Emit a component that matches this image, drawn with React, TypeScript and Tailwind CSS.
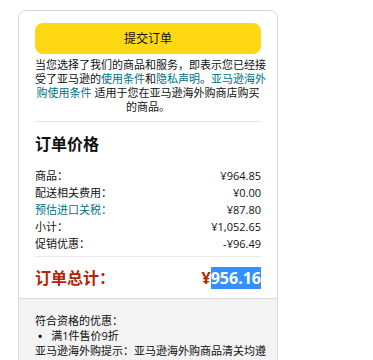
const rows: { label: string; value: string; link?: boolean }[] = [
  { label: "商品：", value: "¥964.85" },
  { label: "配送相关费用：", value: "¥0.00" },
  { label: "预估进口关税：", value: "¥87.80", link: true },
  { label: "小计：", value: "¥1,052.65" },
  { label: "促销优惠：", value: "-¥96.49" },
];

export default function App() {
  return (
    <div
      className="relative w-[373px] h-[360px] overflow-hidden bg-white pl-[18px] pt-[10px] text-[#0f1111]"
      style={{ fontFamily: '"Open Sans", "Noto Sans CJK SC", sans-serif' }}
    >
      <div className="w-[260px] border border-[#d5d9d9] rounded-lg overflow-hidden">
        {/* Place order */}
        <div className="px-4 pt-3 pb-2">
          <button className="w-full h-[31px] rounded-lg bg-[#ffd814] text-[12px] text-[#0f1111] flex items-center justify-center">
            提交订单
          </button>
          <p className="mt-[3.5px] text-[11px] leading-[14px] text-center whitespace-nowrap">
            当您选择了我们的商品和服务，即表示您已经接
            <br />
            受了亚马逊的<span className="text-[#007185]">使用条件</span>和
            <span className="text-[#007185]">隐私声明</span>。
            <span className="text-[#007185]">亚马逊海外</span>
            <br />
            <span className="text-[#007185]">购使用条件</span> 适用于您在亚马逊海外购商店购买
            <br />
            的商品。
          </p>
          <div className="mt-[7.5px] h-px bg-[#e7e7e7]" />

          {/* Order summary */}
          <h2 className="mt-[10px] text-[16px] leading-6 font-bold">订单价格</h2>
          <div className="mt-[11px] text-[11px] leading-[17px]">
            {rows.map((r) => (
              <div key={r.label} className="flex justify-between">
                <span className={r.link ? "text-[#007185]" : ""}>{r.label}</span>
                <span>{r.value}</span>
              </div>
            ))}
          </div>
          <div className="mt-1 h-px bg-[#e7e7e7]" />
          <div className="mt-[9px] flex justify-between text-[16px] leading-6 font-bold text-[#b12704]">
            <span>订单总计：</span>
            <span>
              ¥<span className="bg-[#3390ff] text-white">956.16</span>
            </span>
          </div>
        </div>

        {/* Promotions */}
        <div className="border-t border-[#d5d9d9] bg-[#f3f3f3] px-4 pt-[13.5px] pb-3 text-[11px] leading-[15px]">
          <div>符合资格的优惠：</div>
          <div className="flex gap-[9px] pl-[3px]">
            <span className="font-bold">•</span>
            <span>满1件售价9折</span>
          </div>
          <div className="whitespace-nowrap">亚马逊海外购提示：亚马逊海外购商品清关均遵</div>
          <div className="whitespace-nowrap">
            循中国海关相关规定，<span className="text-[#007185]">详情请参阅</span>
          </div>
        </div>
      </div>
    </div>
  );
}
